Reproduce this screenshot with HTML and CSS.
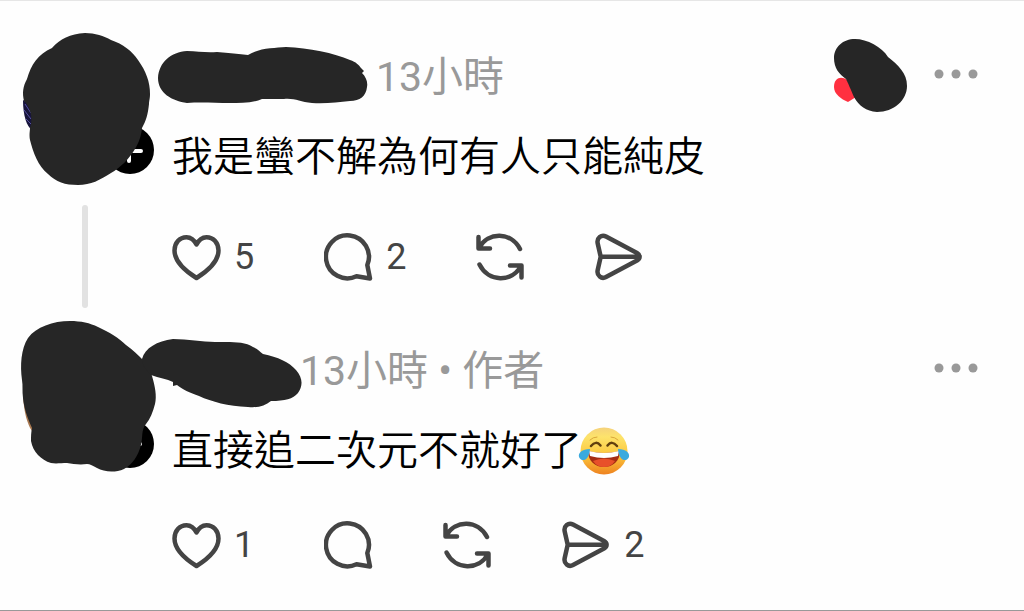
FILE: index.html
```
<!DOCTYPE html>
<html lang="zh-Hant">
<head>
    <meta charset="UTF-8">
    <meta name="viewport" content="width=device-width, initial-scale=1.0">
    <title>串文</title>
    <link rel="stylesheet" href="styles.css">
</head>
<body>
    <!-- shared icons -->
    <svg class="sprite" aria-hidden="true">
        <symbol id="heart" viewBox="0 0 49 50">
            <path d="M24.5 12.5C22 7.5 18.5 5.2 14.5 5.2C7.5 5.2 2.5 11 2.5 18.5C2.5 28.5 12.5 38.5 24.5 46C36.5 38.5 46.5 28.5 46.5 18.5C46.5 11 41.5 5.2 34.5 5.2C30.5 5.2 27 7.5 24.5 12.5Z"/>
        </symbol>
        <symbol id="comment" viewBox="0 0 49 50">
            <path d="M43.3 33A21.5 21.5 0 1 0 32.5 44.3L46 46.5Z"/>
        </symbol>
        <symbol id="repost" viewBox="0 0 49 50">
            <path d="M2.5 5V16.5H14M3 16C12 -.5 35 -.5 44 17"/>
            <path d="M45.5 45.5V33.5H34M45 34C36 50.5 12.5 50.5 3.5 32.5"/>
        </symbol>
        <symbol id="send" viewBox="0 0 49 50">
            <path d="M5.7 24.7L2.7 11.5C1.5 6 6.5 2 11 4.5L42 21C45.5 23 45.5 26.5 42 28.5L11 45C6.5 47.5 1.5 43.5 2.7 38ZM5.7 24.7H44"/>
        </symbol>
        <symbol id="dots" viewBox="0 0 44 16">
            <circle cx="5" cy="5" r="4.5"/>
            <circle cx="22" cy="5" r="4.5"/>
            <circle cx="39" cy="5" r="4.5"/>
        </symbol>
    </svg>

    <main class="thread">
        <article class="post">
            <div class="side">
                <svg class="avatar" viewBox="0 1 172 204" width="172" height="204" aria-hidden="true">
                    <circle cx="130" cy="150" r="24"/>
                    <path class="plus" d="M119 151H141M129 139V161"/>
                    <path class="photo-blue" d="M23 100C23 116 27 127 32 130L35 108Z"/>
                    <path class="photo-line" d="M25 104L31 113M24 110L31 119M26 119L31 124"/>
                    <path class="ink" d="M85 33C95 33 104 36 111 40C123 44 132 51 138 60C146 71 150 82 150 94C150 99 149 101 149 104C148 114 146 121 142 128C141 137 139 142 135 149C129 159 120 168 111 173C100 180 91 185 78 185C65 185 56 182 48 174C38 166 33 152 30 140C29 134 30 131 30 128C34 117 29 105 24 101C22 93 23 86 27 79C31 65 38 54 52 48C60 39 70 34 85 33Z"/>
                </svg>
                <div class="thread-line"></div>
            </div>
            <div class="content">
                <header class="post-header">
                    <svg class="name" viewBox="158 47 210 60" width="210" height="60" aria-hidden="true">
                        <path class="ink" d="M158 78C159 62 171 52 187 51C198 51 205 53 217 52C229 53 239 54 248 55C259 48 274 48 286 47C309 48 334 53 350 60C356 62 359 65 361 68L364 71L362 73C366 77 368 82 367 87C366 96 360 101 350 101C338 102 326 104 312 103C300 102 295 98 284 99C274 99 268 99 262 99C253 103 240 103 230 103C215 103 201 102 187 103C172 101 158 93 158 78Z"/>
                    </svg>
                    <time class="time">13小時</time>
                    <div class="tools">
                        <svg class="liked" viewBox="834 39 73 76" width="73" height="76" aria-hidden="true">
                            <path class="red-heart" d="M834 87C834 77 842 76 847 80L856 97L848 102C841 99 834 94 834 87Z"/>
                            <path class="ink" d="M834 58C834 47 843 39 855 39C867 39 882 47 888 57C898 65 907 73 907 86C907 100 894 112 877 112C866 111 859 106 854 97C851 90 848 83 846 79C839 74 834 68 834 58Z"/>
                        </svg>
                        <button class="more" type="button" aria-label="更多"><svg width="44" height="16"><use href="#dots"/></svg></button>
                    </div>
                </header>
                <p class="text">我是蠻不解為何有人只能純皮</p>
                <div class="actions">
                    <button class="action" type="button" aria-label="讚 5"><svg class="icon"><use href="#heart"/></svg><span class="count">5</span></button>
                    <button class="action" type="button" aria-label="回覆 2"><svg class="icon"><use href="#comment"/></svg><span class="count">2</span></button>
                    <button class="action" type="button" aria-label="轉發"><svg class="icon"><use href="#repost"/></svg></button>
                    <button class="action" type="button" aria-label="分享"><svg class="icon"><use href="#send"/></svg></button>
                </div>
            </div>
        </article>

        <article class="post reply">
            <div class="side">
                <svg class="avatar" viewBox="0 320 172 160" width="172" height="160" aria-hidden="true">
                    <circle cx="130" cy="444" r="24"/>
                    <path class="plus" d="M119 444H140"/>
                    <path class="photo-brown" d="M23 396C24 412 27 424 32 431L35 400Z"/>
                    <path class="ink" d="M70 321C81 321 90 323 98 327C109 332 119 338 126 345C133 350 138 355 143 360C147 363 150 369 152 376C155 386 157 396 155 404C153 412 150 419 146 424C141 430 143 437 141 445C138 456 133 464 124 469C115 473 104 472 97 468C93 466 90 464 87 464C80 465 73 464 67 463C61 463 56 464 51 463C41 460 33 452 31 441C31 436 31 433 32 428C27 417 24 408 23 398C22 391 23 386 22 380C20 365 21 349 28 338C36 327 53 321 70 321Z"/>
                </svg>
            </div>
            <div class="content">
                <header class="post-header">
                    <svg class="name" viewBox="142 332 158 78" width="158" height="78" aria-hidden="true">
                        <path class="ink" d="M142 359C145 348 157 341 173 339C188 339 202 342 215 342C230 342 244 341 253 347C258 349 260 352 263 354C278 357 289 362 296 370C303 378 303 386 298 393C293 399 285 401 271 401C265 406 258 408 248 407C228 406 212 402 199 396C190 393 182 389 177 385L173 386V382C167 379 159 378 151 375C147 371 142 366 142 359Z"/>
                    </svg>
                    <span class="time"><time>13小時</time> • 作者</span>
                    <div class="tools">
                        <button class="more" type="button" aria-label="更多"><svg width="44" height="16"><use href="#dots"/></svg></button>
                    </div>
                </header>
                <p class="text">直接追二次元不就好了<svg class="emoji" viewBox="0 0 52 50" role="img" aria-label="笑到流淚">
                    <defs>
                        <linearGradient id="face" x1="0" y1="0" x2="0" y2="1">
                            <stop offset="0" stop-color="#f5d27c"/>
                            <stop offset=".2" stop-color="#fde36b"/>
                            <stop offset=".6" stop-color="#fbc63b"/>
                            <stop offset="1" stop-color="#ee8220"/>
                        </linearGradient>
                    </defs>
                    <circle cx="26" cy="25" r="23.5" fill="url(#face)"/>
                    <path d="M12 14Q15 11 19 11M33 11Q37 11 40 14" fill="none" stroke="#d9a63c" stroke-width="1" stroke-linecap="round"/>
                    <path d="M13 20Q18 14 22.5 19.5M29.5 19.5Q34 14 39 20" fill="none" stroke="#61400f" stroke-width="2.5" stroke-linecap="round"/>
                    <path d="M10 25Q26 29 42 25C42 35 35 41 26 41S10 35 10 25Z" fill="#a52d14"/>
                    <path d="M15 35Q26 30 37 35Q33 41 26 41T15 35Z" fill="#e8502a"/>
                    <path d="M11 25Q26 29 41 25L40 30Q26 34 12 30Z" fill="#fff"/>
                    <path d="M12 23C4 23 0 27 1 31C3 36 11 36 12 23ZM40 23C48 23 52 27 51 31C49 36 41 36 40 23Z" fill="#3aaade"/>
                </svg></p>
                <div class="actions">
                    <button class="action" type="button" aria-label="讚 1"><svg class="icon"><use href="#heart"/></svg><span class="count">1</span></button>
                    <button class="action" type="button" aria-label="回覆"><svg class="icon"><use href="#comment"/></svg></button>
                    <button class="action" type="button" aria-label="轉發"><svg class="icon"><use href="#repost"/></svg></button>
                    <button class="action" type="button" aria-label="分享 2"><svg class="icon"><use href="#send"/></svg><span class="count">2</span></button>
                </div>
            </div>
        </article>
    </main>
</body>
</html>
```

FILE: styles.css
```
* {
    box-sizing: border-box;
}
body {
    margin: 0;
    background-color: #fefefe;
    color: #000;
    font-family: Roboto, "Noto Sans CJK TC", sans-serif;
}
button {
    padding: 0;
    border: none;
    background: none;
    font-family: inherit;
    cursor: pointer;
}
svg {
    display: block;
    flex-shrink: 0;
}
.sprite {
    position: absolute;
    width: 0;
    height: 0;
}
.thread {
    border-top: 1px solid #e6e6e6;
    border-bottom: 1px solid #999;
    padding-bottom: 40px;
}
.post {
    display: grid;
    grid-template-columns: 172px 1fr;
}
.side {
    display: flex;
    flex-direction: column;
}
.thread-line {
    flex: 1;
    width: 6px;
    margin: 0 0 12px 82px;
    border-radius: 3px;
    background-color: #e2e2e2;
}
.content {
    padding: 51px 46px 38px 0;
}
.reply .content {
    padding-top: 26px;
    padding-bottom: 0;
}
.post-header {
    display: flex;
    align-items: center;
    height: 50px;
}
.name {
    margin-left: -14px;
    margin-right: 8px;
    overflow: visible;
}
.reply .name {
    margin-left: -30px;
    margin-right: 0;
}
.time {
    font-size: 41px;
    line-height: 50px;
    color: #999;
    white-space: nowrap;
}
.tools {
    display: flex;
    align-items: center;
    gap: 27px;
    margin-left: auto;
}
.more {
    fill: #999;
}
.text {
    margin: 27px 0 47px;
    font-size: 41px;
    font-weight: 350;
    line-height: 56px;
}
.reply .text {
    display: flex;
    align-items: center;
    margin-bottom: 41px;
}
.emoji {
    width: 52px;
    height: 50px;
    margin-left: -4px;
}
.actions {
    display: flex;
    gap: 70px;
}
.action {
    display: flex;
    align-items: center;
    gap: 13px;
    height: 50px;
    color: #444;
}
.icon {
    width: 49px;
    height: 50px;
    fill: none;
    stroke: #444;
    stroke-width: 4.5px;
    stroke-linecap: round;
    stroke-linejoin: round;
}
.count {
    font-size: 36px;
    line-height: 50px;
}
.ink {
    fill: #262626;
}
.plus {
    stroke: #fff;
    stroke-width: 4px;
    stroke-linecap: round;
}
.photo-blue {
    fill: #17143c;
}
.photo-line {
    stroke: #5550a0;
    stroke-width: 1px;
}
.photo-brown {
    fill: #a87850;
}
.red-heart {
    fill: #ff3040;
}
```
